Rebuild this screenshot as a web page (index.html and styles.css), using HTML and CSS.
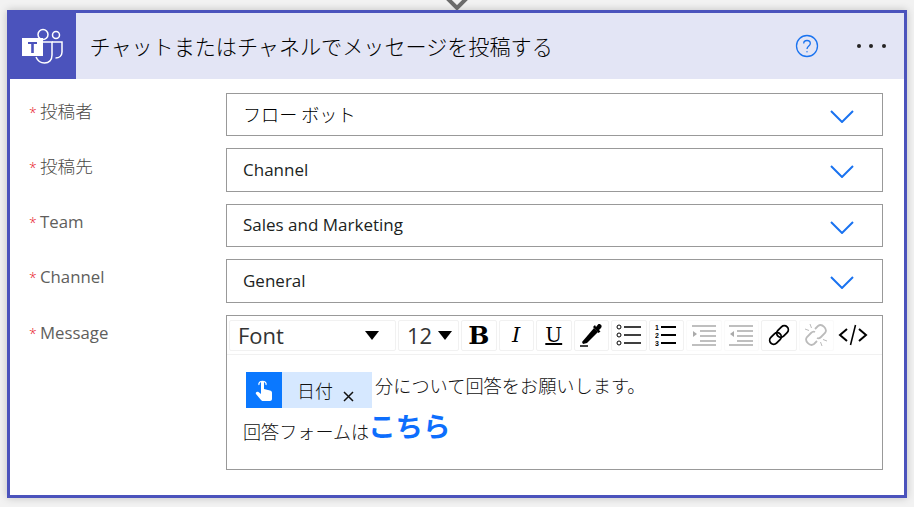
FILE: index.html
```html
<!DOCTYPE html>
<html lang="ja">
<head>
<meta charset="UTF-8">
<meta name="viewport" content="width=device-width, initial-scale=1.0">
<title>チャットまたはチャネルでメッセージを投稿する</title>
<link rel="stylesheet" href="styles.css">
</head>
<body>
<svg class="connector" width="26" height="10" viewBox="0 0 26 10"><path d="M3 -2 L13 8 L23 -2" fill="none" stroke="#6b6b6b" stroke-width="4"/></svg>
<div class="card">
  <div class="header">
    <div class="logo">
      <svg width="44" height="38" viewBox="0 0 44 38" fill="none" stroke="#fff" stroke-width="1.5">
        <circle cx="22" cy="7.500" r="5"/>
        <circle cx="35" cy="8" r="3.500"/>
        <path d="M31 15 H41 V25 C41 29 38 31 34.500 31"/>
        <path d="M20 15 H31 V28 C31 33 28 36 23.500 36 C19 36 16.500 33.500 15 30"/>
        <rect x="1" y="11" width="21" height="18" fill="#fff" stroke="none"/>
        <path d="M7 15 H16 V17 H12.800 V26 H10.200 V17 H7 Z" fill="#4b53bc" stroke="none"/>
      </svg>
    </div>
    <div class="title">チャットまたはチャネルでメッセージを投稿する</div>
    <svg class="help" width="24" height="24" viewBox="0 0 24 24" fill="none" stroke="#1a73f0" stroke-width="1.300">
      <circle cx="12" cy="12" r="10.500"/>
      <path d="M8.700 9.500 C8.700 5.500 15.300 5.500 15.300 9.500 C15.300 12 12 12 12 15"/>
      <circle cx="12" cy="17.800" r="0.700" fill="#1a73f0" stroke="none"/>
    </svg>
    <div class="more"><i></i><i></i><i></i></div>
  </div>

  <div class="form">
    <div class="row">
      <div class="label ja"><span class="req">*</span>投稿者</div>
      <div class="select"><span class="ja-value">フロー ボット</span><svg class="chev" width="24" height="13" viewBox="0 0 24 13"><path d="M1 1 L12 12 L23 1" fill="none" stroke="#1a73f0" stroke-width="2"/></svg></div>
    </div>
    <div class="row">
      <div class="label ja"><span class="req">*</span>投稿先</div>
      <div class="select"><span>Channel</span><svg class="chev" width="24" height="13" viewBox="0 0 24 13"><path d="M1 1 L12 12 L23 1" fill="none" stroke="#1a73f0" stroke-width="2"/></svg></div>
    </div>
    <div class="row">
      <div class="label"><span class="req">*</span>Team</div>
      <div class="select"><span>Sales and Marketing</span><svg class="chev" width="24" height="13" viewBox="0 0 24 13"><path d="M1 1 L12 12 L23 1" fill="none" stroke="#1a73f0" stroke-width="2"/></svg></div>
    </div>
    <div class="row">
      <div class="label"><span class="req">*</span>Channel</div>
      <div class="select"><span>General</span><svg class="chev" width="24" height="13" viewBox="0 0 24 13"><path d="M1 1 L12 12 L23 1" fill="none" stroke="#1a73f0" stroke-width="2"/></svg></div>
    </div>
    <div class="row">
      <div class="label"><span class="req">*</span>Message</div>
      <div class="editor">
        <div class="toolbar">
          <div class="tool font-pick"><span>Font</span><b class="caret"></b></div>
          <div class="tool size-pick"><span>12</span><b class="caret"></b></div>
          <div class="tool bold">B</div>
          <div class="tool italic">I</div>
          <div class="tool under">U</div>
          <div class="tool">
            <svg width="26" height="26" viewBox="0 0 26 26"><path d="M16 6 L20 10 L9 21 L5 22 L4 20 Z" fill="#000"/><path d="M15 5 L17 3 L18 5 L20 2.500 C22 1 25 4 23 6 L21 8 L22.500 9.500 L20.500 11 Z" fill="#000"/><rect x="2" y="23" width="8" height="2" fill="#444"/></svg>
          </div>
          <div class="tool">
            <svg width="26" height="24" viewBox="0 0 26 24" fill="none" stroke="#000"><circle cx="3" cy="4" r="2"/><circle cx="3" cy="12" r="2"/><circle cx="3" cy="20" r="2"/><path d="M8 4 H25 M8 12 H25 M8 20 H25" stroke-width="1.500"/></svg>
          </div>
          <div class="tool">
            <svg width="22" height="24" viewBox="0 0 22 24"><path d="M6 4 H21 M6 12 H21 M6 20 H21" stroke="#000" stroke-width="2"/><text x="0" y="7" class="num">1</text><text x="0" y="15" class="num">2</text><text x="0" y="23" class="num">3</text></svg>
          </div>
          <div class="tool off">
            <svg width="26" height="24" viewBox="0 0 26 24"><path d="M1 3 H25 M9 8 H25 M9 13 H25 M9 18 H25 M1 22 H25" stroke="#aaa" stroke-width="1.500"/><path d="M2 8 L6 11 L2 14 Z" fill="#aaa"/></svg>
          </div>
          <div class="tool off">
            <svg width="26" height="24" viewBox="0 0 26 24"><path d="M1 3 H25 M9 8 H25 M9 13 H25 M9 18 H25 M1 22 H25" stroke="#aaa" stroke-width="1.500"/><path d="M6 8 L2 11 L6 14 Z" fill="#aaa"/></svg>
          </div>
          <div class="tool">
            <svg width="24" height="24" viewBox="0 0 24 24" fill="none" stroke="#000" stroke-width="1.800"><g transform="rotate(-45 12 12)"><rect x="0.500" y="8" width="13" height="8" rx="4"/><rect x="10.500" y="8" width="13" height="8" rx="4"/></g></svg>
          </div>
          <div class="tool off">
            <svg width="24" height="24" viewBox="0 0 24 24" fill="none" stroke="#bbb" stroke-width="1.800"><path d="M11 9 C9 8 8 9 7 10 L3 14 C0 18 6 24 10 21 L13 18"/><path d="M13 15 C15 16 16 15 17 14 L21 10 C24 6 18 0 14 3 L11 6"/><path d="M6 1 L7.500 5 M1 6 L5 7.500 M18 23 L16.500 19 M23 18 L19 16.500" stroke-width="1"/></svg>
          </div>
          <div class="tool code">
            <svg width="30" height="24" viewBox="0 0 30 24" fill="none" stroke="#000" stroke-width="2"><path d="M9 6 L2 12 L9 18 M21 6 L28 12 L21 18"/><path d="M17.500 2 L12.500 22" stroke-width="1.600"/></svg>
          </div>
        </div>
        <div class="body">
          <div class="line-one">
            <span class="chip">
              <span class="chip-icon">
                <svg width="20" height="24" viewBox="0 0 20 24"><path d="M7 4.500 C7 2.500 10 2.500 10 4.500 V11 L16 12.500 C18 13 18 14 18 15.500 V21 C18 22 17 23 16 23 H9 C8 23 7.500 22.500 7 22 L2 16 C1 14.500 3 13 4.500 14 L7 16 Z" fill="#fff"/><path d="M5 7 C3.500 2 13.500 2 12 7" fill="none" stroke="#fff" stroke-width="1.200"/></svg>
              </span>
              <span class="chip-text">日付</span>
              <svg class="chip-x" width="11" height="11" viewBox="0 0 11 11"><path d="M1 1 L10 10 M10 1 L1 10" stroke="#111" stroke-width="1.500"/></svg>
            </span>
            <span class="after-chip">分について回答をお願いします。</span>
          </div>
          <div class="line-two">回答フォームは<a class="link">こちら</a></div>
        </div>
      </div>
    </div>
  </div>
</div>
</body>
</html>
```

FILE: styles.css
```css
body {
  margin: 0;
  height: 507px;
  overflow: hidden;
  background-color: #f2f2f2;
  font-family: "Open Sans", "Noto Sans CJK JP", sans-serif;
  color: #252423;
}

.connector {
  position: absolute;
  left: 444px;
  top: 0;
}

.card {
  box-sizing: border-box;
  width: 900px;
  height: 488px;
  margin: 10px 0 0 7px;
  border: 3px solid #4b53bc;
  background-color: #fff;
  box-shadow: 0 0 8px rgba(0, 0, 0, 0.2);
}

.header {
  display: flex;
  align-items: center;
  height: 66px;
  background-color: #e3e5f5;
}

.logo {
  display: flex;
  align-items: center;
  justify-content: center;
  width: 66px;
  height: 66px;
  background-color: #4b53bc;
}

.title {
  flex: 1;
  margin-left: 13.500px;
  font-size: 21.100px;
  font-family: "Noto Sans CJK JP", sans-serif;
  font-weight: 300;
  color: #000;
}

.help {
  margin-right: 38px;
}

.more {
  display: flex;
  gap: 8.500px;
  margin-right: 18.500px;
}

.more i {
  width: 4px;
  height: 4px;
  border-radius: 50%;
  background-color: #252423;
}

.form {
  display: flex;
  flex-direction: column;
  gap: 12px;
  padding: 13.750px 21px 0 19px;
}

.row {
  display: flex;
}

.label {
  width: 197px;
  padding-top: 6px;
  font-size: 16.800px;
  line-height: 24px;
  color: #605e5c;
}

.label.ja {
  font-size: 17.600px;
  font-weight: 300;
  color: #4a4846;
}

.req {
  display: inline-block;
  width: 11px;
  color: #e81123;
  font-size: 14px;
  font-weight: 300;
}

.select {
  box-sizing: border-box;
  flex: 1;
  display: flex;
  align-items: center;
  justify-content: space-between;
  height: 43.500px;
  padding: 0 28px 0 16px;
  border: 1px solid #999;
  font-size: 17px;
  color: #201f1e;
}

.select span {
  margin-top: -2px;
}

.select .ja-value {
  font-family: "Noto Sans CJK JP", sans-serif;
  font-size: 18.100px;
  font-weight: 300;
  color: #000;
}

.chev {
  margin-top: 3px;
}

.editor {
  box-sizing: border-box;
  flex: 1;
  height: 155px;
  border: 1px solid #999;
}

.toolbar {
  display: flex;
  gap: 2px;
  height: 39px;
  padding: 4px 0 0 2px;
  box-sizing: border-box;
  border-bottom: 1px solid #f1f1f1;
}

.tool {
  box-sizing: border-box;
  display: flex;
  align-items: center;
  justify-content: center;
  width: 35.500px;
  height: 31px;
  border: 1px solid #f1f1f1;
  border-radius: 2px;
  color: #000;
}

.tool.off {
  border-color: #fafafa;
}

.tool.code {
  width: 34px;
  border: 0;
}

.font-pick {
  width: 167px;
  justify-content: space-between;
  padding: 0 16px 0 8px;
  font-size: 22px;
}

.size-pick {
  width: 61px;
  justify-content: space-between;
  padding: 0 6px 0 8px;
  font-size: 22px;
}

.font-pick span, .size-pick span {
  color: #333;
}

.caret {
  width: 0;
  height: 0;
  border-left: 7.500px solid transparent;
  border-right: 7.500px solid transparent;
  border-top: 9px solid #000;
}

.bold {
  font: bold 25px "DejaVu Serif", serif;
}

.italic {
  font: italic 21px "DejaVu Serif", serif;
}

.under {
  font: normal 20px "DejaVu Serif", serif;
  text-decoration: underline;
}

.num {
  font: bold 7px "Liberation Sans", sans-serif;
}

.body {
  padding: 17px 0 0 16px;
  font-family: "Noto Sans CJK JP", sans-serif;
  font-weight: 300;
  font-size: 18.200px;
  color: #111;
}

.line-one {
  display: flex;
  align-items: flex-start;
  margin-left: 3px;
}

.chip {
  display: flex;
  align-items: center;
  width: 126px;
  height: 36px;
  background-color: #d6e8ff;
}

.chip-icon {
  display: flex;
  align-items: center;
  justify-content: center;
  width: 36px;
  height: 36px;
  background-color: #0a78ff;
}

.chip-text {
  margin-left: 15px;
  font-size: 18px;
}

.chip-x {
  margin: 14px 0 0 10px;
}

.after-chip {
  margin: 0 0 0 3px;
  line-height: 26px;
}

.line-two {
  display: flex;
  align-items: flex-end;
  height: 36px;
  font-size: 18.100px;
}

.link {
  margin-left: -1px;
  color: #0d6efd;
  font-size: 27.500px;
  font-weight: bold;
  line-height: 38px;
  font-family: "Noto Sans CJK JP", sans-serif;
}
```
